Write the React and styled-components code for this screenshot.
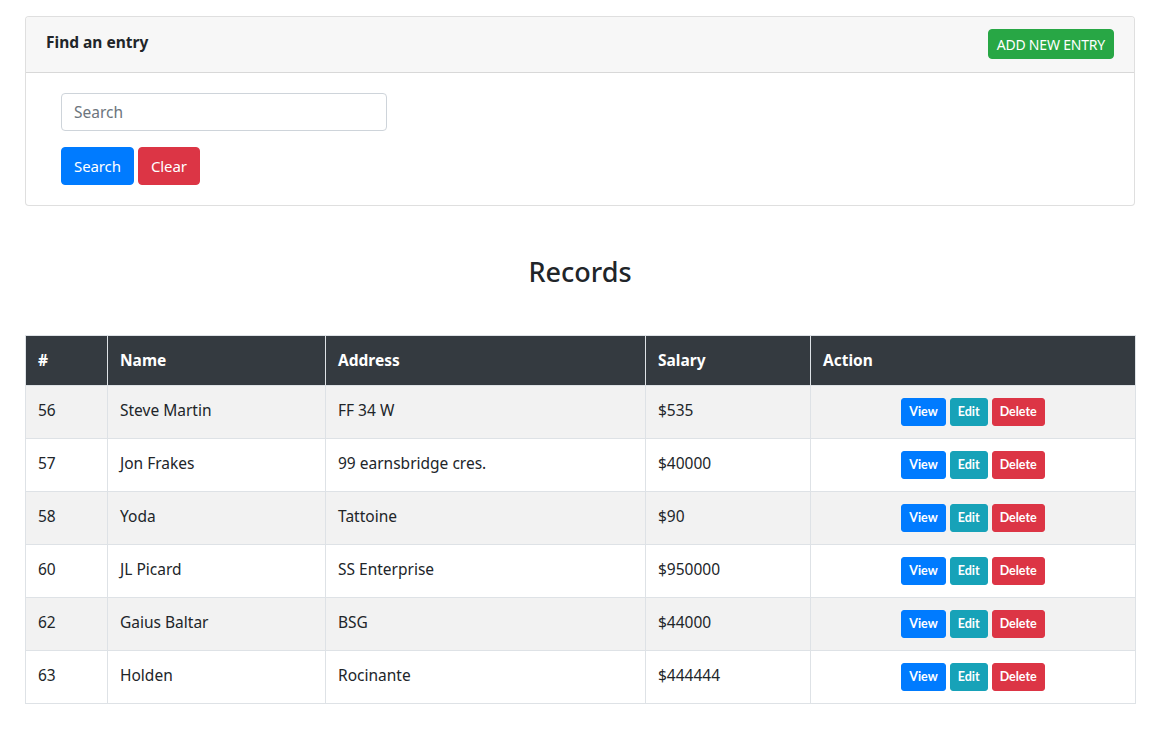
import React from "react";
import styled, { createGlobalStyle } from "styled-components";

const Global = createGlobalStyle`
  html, body { margin: 0; padding: 0; background: #fff; }
  body {
    font-family: "Noto Sans", "Open Sans", sans-serif;
    font-size: 16px;
    line-height: 1.5;
    color: #212529;
  }
  * { box-sizing: border-box; }
`;

const Page = styled.div`
  width: 1110px;
  margin: 16px 0 0 25px;
  padding-bottom: 40px;
`;

const Card = styled.div`
  border: 1px solid rgba(0, 0, 0, 0.125);
  border-radius: 4px;
  background: #fff;
`;

const CardHeader = styled.div`
  display: flex;
  justify-content: space-between;
  align-items: flex-start;
  height: 56px;
  padding: 12px 20px 0 20px;
  background: #f7f7f7;
  border-bottom: 1px solid rgba(0, 0, 0, 0.125);
  border-radius: 3px 3px 0 0;
`;

const HeaderTitle = styled.div`
  font-weight: 700;
  font-size: 15.5px;
  line-height: 24px;
  padding-top: 1px;
`;

const Btn = styled.button`
  display: inline-block;
  border: 1px solid ${(p) => p.$bg};
  background: ${(p) => p.$bg};
  color: #fff;
  font-family: inherit;
  font-size: 16px;
  font-weight: 400;
  line-height: 1.5;
  border-radius: 4px;
  padding: 6px 12px;
  cursor: pointer;
  white-space: nowrap;
`;

const AddBtn = styled(Btn)`
  padding: 0 8px;
  height: 30px;
  font-size: 14px;
  letter-spacing: -0.2px;
`;

const CardBody = styled.div`
  padding: 20px 35px 20px 35px;
`;

const SearchInput = styled.input`
  display: block;
  width: 326px;
  height: 38px;
  padding: 6px 12px;
  font-family: inherit;
  font-size: 15.5px;
  color: #495057;
  border: 1px solid #ced4da;
  border-radius: 4px;
  outline: none;
  &::placeholder { color: #6c757d; }
`;

const ButtonRow = styled.div`
  display: flex;
  gap: 4px;
  margin-top: 16px;
`;

const FormBtn = styled(Btn)`
  height: 38px;
  padding: 0 12px;
  font-size: 15px;
  letter-spacing: -0.1px;
`;

const Title = styled.h3`
  margin: 49px 0 46px;
  text-align: center;
  font-size: 27px;
  font-weight: 500;
  line-height: 34px;
  color: #212529;
`;

const Table = styled.table`
  width: 1110px;
  border-collapse: collapse;
  table-layout: fixed;
  border: 1px solid #dee2e6;
`;

const Th = styled.th`
  background: #343a40;
  color: #fff;
  text-align: left;
  font-weight: 700;
  font-size: 15.5px;
  height: 50px;
  padding: 0 12px;
  border: 1px solid #dee2e6;
  border-top: none;
`;

const Tr = styled.tr`
  background: ${(p) => (p.$striped ? "#f2f2f2" : "#fff")};
`;

const Td = styled.td`
  height: 53px;
  padding: 0 12px 2px;
  border: 1px solid #dee2e6;
  font-size: 15.5px;
  vertical-align: middle;
  text-align: ${(p) => (p.$center ? "center" : "left")};
`;

const Actions = styled.div`
  display: flex;
  justify-content: center;
  gap: 4px;
  padding-top: 2px;
`;

const SmallBtn = styled(Btn)`
  height: 28px;
  padding: 0 7px;
  font-size: 12.5px;
  font-weight: 700;
  border-radius: 3px;
  font-family: "Lato", "Noto Sans", sans-serif;
`;

const rows = [
  ["56", "Steve Martin", "FF 34 W", "$535"],
  ["57", "Jon Frakes", "99 earnsbridge cres.", "$40000"],
  ["58", "Yoda", "Tattoine", "$90"],
  ["60", "JL Picard", "SS Enterprise", "$950000"],
  ["62", "Gaius Baltar", "BSG", "$44000"],
  ["63", "Holden", "Rocinante", "$444444"],
];

const widths = [82, 218, 320, 165, 325];

export default function App() {
  return (
    <>
      <Global />
      <Page>
        <Card>
          <CardHeader>
            <HeaderTitle>Find an entry</HeaderTitle>
            <AddBtn $bg="#28a745">ADD NEW ENTRY</AddBtn>
          </CardHeader>
          <CardBody>
            <SearchInput placeholder="Search" />
            <ButtonRow>
              <FormBtn $bg="#007bff">Search</FormBtn>
              <FormBtn $bg="#dc3545">Clear</FormBtn>
            </ButtonRow>
          </CardBody>
        </Card>
        <Title>Records</Title>
        <Table>
          <colgroup>
            {widths.map((w, i) => (
              <col key={i} style={{ width: w }} />
            ))}
          </colgroup>
          <thead>
            <tr>
              <Th>#</Th>
              <Th>Name</Th>
              <Th>Address</Th>
              <Th>Salary</Th>
              <Th>Action</Th>
            </tr>
          </thead>
          <tbody>
            {rows.map((r, i) => (
              <Tr key={r[0]} $striped={i % 2 === 0}>
                <Td>{r[0]}</Td>
                <Td>{r[1]}</Td>
                <Td>{r[2]}</Td>
                <Td>{r[3]}</Td>
                <Td $center>
                  <Actions>
                    <SmallBtn $bg="#007bff">View</SmallBtn>
                    <SmallBtn $bg="#17a2b8">Edit</SmallBtn>
                    <SmallBtn $bg="#dc3545">Delete</SmallBtn>
                  </Actions>
                </Td>
              </Tr>
            ))}
          </tbody>
        </Table>
      </Page>
    </>
  );
}
